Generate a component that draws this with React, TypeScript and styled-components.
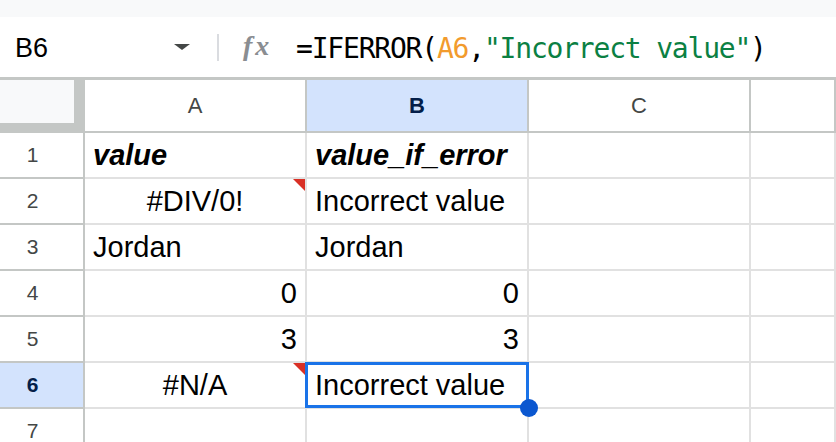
import React from 'react'
import styled, { createGlobalStyle, css } from 'styled-components'

let GlobalStyle = createGlobalStyle`
	html, body {
		margin: 0;
		padding: 0;
		background: #ffffff;
	}
	body {
		font-family: "Liberation Sans", Arial, sans-serif;
		overflow: hidden;
	}
`

let Page = styled.div`
	width: 836px;
	height: 442px;
	overflow: hidden;
	background: #ffffff;
`

let TopStrip = styled.div`
	height: 17px;
	background: #f8f9fa;
`

let FormulaBar = styled.div`
	height: 60px;
	border-bottom: 3px solid #c4c7c5;
	display: flex;
	align-items: center;
	padding-left: 15px;
`

let NameBox = styled.div`
	width: 175px;
	display: flex;
	align-items: center;
	justify-content: space-between;
	font-size: 27px;
	color: #000000;
	padding-top: 2px;
`

let DropArrow = styled.span`
	width: 0;
	height: 0;
	border-left: 8.5px solid transparent;
	border-right: 8.5px solid transparent;
	border-top: 6px solid #444746;
	margin-top: -3px;
`

let Divider = styled.span`
	width: 2px;
	height: 27px;
	background: #dadce0;
	margin-left: 27px;
`

let FxIcon = styled.span`
	margin-left: 24px;
	width: 31px;
	font-family: "Liberation Serif", "Times New Roman", serif;
	font-style: italic;
	font-weight: bold;
	font-size: 28px;
	letter-spacing: 3px;
	color: #8a8d91;
	margin-top: -2px;
`

let Formula = styled.div`
	margin-left: 22px;
	font-family: "DejaVu Sans Mono", "Liberation Mono", monospace;
	font-size: 28px;
	letter-spacing: -1.2px;
	color: #000000;
	white-space: nowrap;
	padding-top: 2px;
`

let Ref = styled.span`
	color: #f29b2d;
`

let Str = styled.span`
	color: #0b8043;
`

let Grid = styled.div`
	display: grid;
	grid-template-columns: 85px 222px 222px 222px 1fr;
	grid-template-rows: 53px;
	grid-auto-rows: 46px;
`

let Corner = styled.div`
	background: #f8f9fa;
	border-right: 11px solid #c4c7c5;
	border-bottom: 10px solid #c4c7c5;
`

let activeHeader = css`
	background: #d3e3fd;
	color: #041e49;
	font-weight: bold;
`

let ColHeader = styled.div<{ $active?: boolean }>`
	border-right: 2px solid #c4c7c5;
	border-bottom: 2px solid #c4c7c5;
	text-align: center;
	line-height: 51px;
	font-size: 22px;
	color: #444746;
	${p => p.$active && activeHeader}
`

let RowHeader = styled.div<{ $active?: boolean }>`
	border-right: 2px solid #c4c7c5;
	border-bottom: 2px solid #c4c7c5;
	text-align: center;
	padding-right: 18px;
	line-height: 44px;
	font-size: 21px;
	color: #444746;
	${p => p.$active && activeHeader}
`

let Cell = styled.div<{ $align?: 'left' | 'center' | 'right'; $header?: boolean }>`
	position: relative;
	border-right: 2px solid #e1e1e1;
	border-bottom: 2px solid #e1e1e1;
	padding: 0 8px;
	line-height: 44px;
	font-size: 29px;
	color: #000000;
	white-space: nowrap;
	text-align: ${p => p.$align || 'left'};
	${p => p.$header && css`
		font-weight: bold;
		font-style: italic;
	`}
`

let ErrorMark = styled.span`
	position: absolute;
	top: 0;
	right: 0;
	width: 0;
	height: 0;
	border-top: 12px solid #d93025;
	border-left: 12px solid transparent;
`

let Selection = styled.span`
	position: absolute;
	left: -2px;
	right: -2px;
	top: -1px;
	bottom: -1px;
	border: 3px solid #1a73e8;
	z-index: 2;
	pointer-events: none;
`

let FillHandle = styled.span`
	position: absolute;
	right: -12px;
	bottom: -12px;
	width: 18px;
	height: 18px;
	border-radius: 50%;
	background: #0b57d0;
`

type CellData = {
	text?: string;
	align?: 'left' | 'center' | 'right';
	header?: boolean;
	error?: boolean;
	selected?: boolean;
}

let rows: CellData[][] = [
	[{ text: 'value', header: true }, { text: 'value_if_error', header: true }],
	[{ text: '#DIV/0!', align: 'center', error: true }, { text: 'Incorrect value' }],
	[{ text: 'Jordan' }, { text: 'Jordan' }],
	[{ text: '0', align: 'right' }, { text: '0', align: 'right' }],
	[{ text: '3', align: 'right' }, { text: '3', align: 'right' }],
	[{ text: '#N/A', align: 'center', error: true }, { text: 'Incorrect value', selected: true }],
	[{}, {}],
]

let columns = ['A', 'B', 'C', '']

export default function App() {
	return (
		<Page>
			<GlobalStyle />
			<TopStrip />
			<FormulaBar>
				<NameBox>
					<span>B6</span>
					<DropArrow />
				</NameBox>
				<Divider />
				<FxIcon>fx</FxIcon>
				<Formula>
					=IFERROR(<Ref>A6</Ref>,<Str>"Incorrect value"</Str>)
				</Formula>
			</FormulaBar>
			<Grid>
				<Corner />
				{columns.map(c => (
					<ColHeader key={c || 'D'} $active={c === 'B'}>{c}</ColHeader>
				))}
				{rows.map((row, i) => (
					<React.Fragment key={i}>
						<RowHeader $active={i === 5}>{i + 1}</RowHeader>
						{row.map((cell, j) => (
							<Cell key={j} $align={cell.align} $header={cell.header}>
								{cell.text}
								{cell.error && <ErrorMark />}
								{cell.selected && (
									<Selection>
										<FillHandle />
									</Selection>
								)}
							</Cell>
						))}
						<Cell />
						<Cell />
					</React.Fragment>
				))}
			</Grid>
		</Page>
	)
}
